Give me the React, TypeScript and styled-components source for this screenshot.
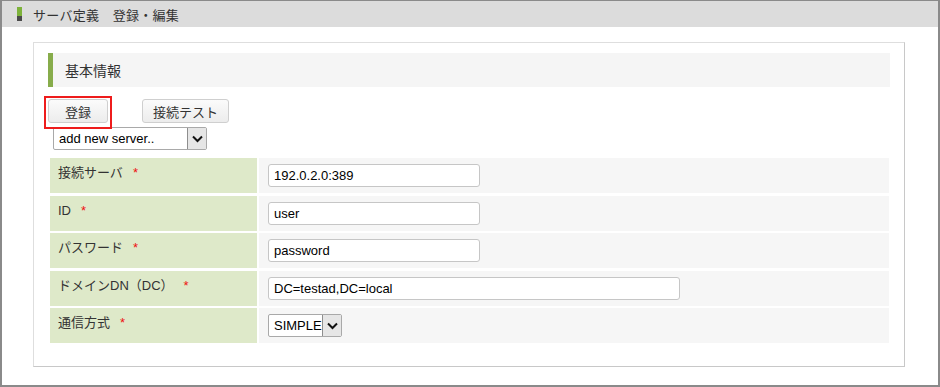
import React from 'react';
import styled, { createGlobalStyle } from 'styled-components';

const GlobalStyle = createGlobalStyle`
  html, body {
    margin: 0;
    padding: 0;
    background: #ffffff;
  }
  * {
    box-sizing: border-box;
  }
  body {
    font-family: "Liberation Sans", Arial, "Noto Sans CJK JP", sans-serif;
    font-size: 13px;
    color: #333333;
  }
`;

const Frame = styled.div`
  width: 940px;
  height: 387px;
  border: 2px solid #8a8a8a;
  border-top-width: 1px;
  background: #ffffff;
  display: flex;
  flex-direction: column;
`;

const TitleBar = styled.div`
  height: 26px;
  background: #dcdcdc;
  display: flex;
  align-items: center;
  padding-left: 15px;
  gap: 11px;
`;

const Marker = styled.span`
  width: 5px;
  height: 14px;
  display: flex;
  flex-direction: column;
  & > i:first-child {
    flex: 9;
    background: #7db23a;
  }
  & > i:last-child {
    flex: 5;
    background: #4a4a4a;
  }
`;

const Title = styled.h1`
  margin: 0;
  font-size: 13px;
  font-weight: normal;
  color: #333333;
  letter-spacing: 0.3px;
`;

const Main = styled.div`
  padding: 15px 33px 0 31px;
`;

const Panel = styled.section`
  height: 325px;
  border: 1px solid #dedede;
  border-right-color: #c8c8c8;
  border-bottom-color: #c8c8c8;
  padding: 10px 14px 0 14px;
`;

const SectionHead = styled.h2`
  margin: 0;
  height: 34px;
  display: flex;
  align-items: center;
  border-left: 5px solid #87ac4b;
  background: #f5f5f5;
  padding-left: 12px;
  font-size: 14px;
  font-weight: normal;
  color: #333333;
`;

const ButtonRow = styled.div`
  display: flex;
  align-items: flex-start;
  gap: 30px;
  margin-top: 9px;
`;

/* red annotation frame drawn round the 登録 button */
const Highlight = styled.span`
  display: flex;
  margin-left: -4px;
  padding: 1px 2px 4px 2px;
  border: 2px solid #ee1c1c;
`;

const Button = styled.button<{ $width: number; $top?: number }>`
  width: ${(p) => p.$width}px;
  height: 24px;
  margin-top: ${(p) => p.$top ?? 0}px;
  padding: 0;
  border: 1px solid #cfcfcf;
  border-radius: 3px;
  background: linear-gradient(#fbfbfb, #ececec);
  font-family: inherit;
  font-size: 13px;
  color: #333333;
`;

const FakeSelect = styled.div<{ $width: number }>`
  width: ${(p) => p.$width}px;
  height: 23px;
  display: flex;
  align-items: stretch;
  border: 1px solid #a9a9a9;
  border-radius: 2px;
  background: #ffffff;
  font-size: 13px;
  color: #000000;
`;

const SelectText = styled.span`
  flex: 1;
  display: flex;
  align-items: center;
  padding-left: 5px;
  white-space: nowrap;
  overflow: hidden;
`;

const ArrowBox = styled.span`
  width: 19px;
  display: flex;
  align-items: center;
  justify-content: center;
  border-left: 1px solid #8e8e8e;
  background: #e6e6e6;
`;

const TopSelectWrap = styled.div`
  margin-top: -2px;
  padding-left: 5px;
`;

const Table = styled.div`
  margin: 8px 1px 0 2px;
  display: grid;
  grid-template-columns: 207px 1fr;
  grid-auto-rows: 35px;
  column-gap: 2px;
  row-gap: 2.5px;
`;

const Label = styled.div`
  background: #dee9c9;
  padding: 7px 0 0 8px;
  line-height: 16px;
  color: #333333;
`;

const Required = styled.span`
  color: #ee1111;
  margin-left: 10px;
`;

const Value = styled.div`
  background: #f6f6f6;
  padding: 6px 0 0 9px;
`;

const TextInput = styled.input<{ $width: number }>`
  display: block;
  width: ${(p) => p.$width}px;
  height: 23px;
  border: 1px solid #c6c6c6;
  border-radius: 3px;
  padding: 0 5px;
  font-family: "Liberation Sans", Arial, sans-serif;
  font-size: 13px;
  color: #000000;
  background: #ffffff;
`;

function Chevron() {
  return (
    <svg width="11" height="8" viewBox="0 0 11 8" aria-hidden="true">
      <path d="M1 1.5 L5.5 6 L10 1.5" fill="none" stroke="#111" strokeWidth="2" />
    </svg>
  );
}

function Select({ value, width }: { value: string; width: number }) {
  return (
    <FakeSelect $width={width}>
      <SelectText>{value}</SelectText>
      <ArrowBox><Chevron /></ArrowBox>
    </FakeSelect>
  );
}

const fields = [
  { label: '接続サーバ', value: '192.0.2.0:389', width: 212 },
  { label: 'ID', value: 'user', width: 212 },
  { label: 'パスワード', value: 'password', width: 212 },
  { label: 'ドメインDN（DC）', value: 'DC=testad,DC=local', width: 412 },
];

export default function App() {
  return (
    <>
      <GlobalStyle />
      <Frame>
        <TitleBar>
          <Marker><i /><i /></Marker>
          <Title>サーバ定義　登録・編集</Title>
        </TitleBar>
        <Main>
          <Panel>
            <SectionHead>基本情報</SectionHead>
            <ButtonRow>
              <Highlight>
                <Button $width={60}>登録</Button>
              </Highlight>
              <Button $width={87} $top={3}>接続テスト</Button>
            </ButtonRow>
            <TopSelectWrap>
              <Select value="add new server.." width={154} />
            </TopSelectWrap>
            <Table>
              {fields.map((f) => (
                <React.Fragment key={f.label}>
                  <Label>
                    {f.label}
                    <Required>*</Required>
                  </Label>
                  <Value>
                    <TextInput $width={f.width} defaultValue={f.value} />
                  </Value>
                </React.Fragment>
              ))}
              <Label>
                通信方式
                <Required>*</Required>
              </Label>
              <Value>
                <Select value="SIMPLE" width={74} />
              </Value>
            </Table>
          </Panel>
        </Main>
      </Frame>
    </>
  );
}
